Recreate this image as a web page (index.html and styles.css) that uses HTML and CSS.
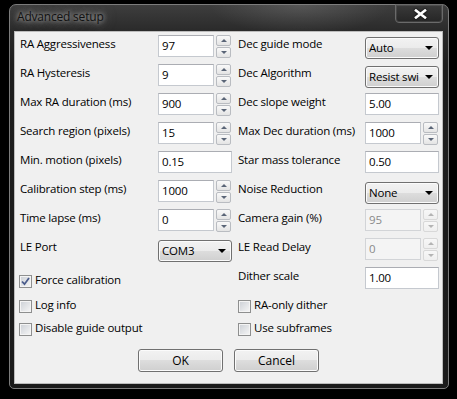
FILE: index.html
```html
<!DOCTYPE html>
<html lang="en">
<head>
    <meta charset="UTF-8">
    <title>Advanced setup</title>
    <link rel="stylesheet" href="styles.css">
</head>
<body>
    <div class="window">
        <div class="titlebar">
            <span class="title">Advanced setup</span>
            <span class="close">
                <svg width="13" height="10" viewBox="0 0 13 10"><path d="M2 1.5 L11 8.5 M11 1.5 L2 8.5" stroke="#fff" stroke-width="2.6" stroke-linecap="square"/></svg>
            </span>
        </div>

        <div class="client">
            <div class="form">
                <span class="lbl">RA Aggressiveness</span>
                <div class="spin"><span class="edit">97</span><span class="arrows"><i class="up"></i><i class="dn"></i></span></div>
                <span class="lbl">Dec guide mode</span>
                <div class="combo"><span class="val">Auto</span><i class="drop"></i></div>

                <span class="lbl">RA Hysteresis</span>
                <div class="spin"><span class="edit">9</span><span class="arrows"><i class="up"></i><i class="dn"></i></span></div>
                <span class="lbl">Dec Algorithm</span>
                <div class="combo"><span class="val">Resist swi</span><i class="drop"></i></div>

                <span class="lbl">Max RA duration (ms)</span>
                <div class="spin"><span class="edit">900</span><span class="arrows"><i class="up"></i><i class="dn"></i></span></div>
                <span class="lbl">Dec slope weight</span>
                <span class="edit wide">5.00</span>

                <span class="lbl">Search region (pixels)</span>
                <div class="spin"><span class="edit">15</span><span class="arrows"><i class="up"></i><i class="dn"></i></span></div>
                <span class="lbl">Max Dec duration (ms)</span>
                <div class="spin"><span class="edit">1000</span><span class="arrows"><i class="up"></i><i class="dn"></i></span></div>

                <span class="lbl">Min. motion (pixels)</span>
                <span class="edit wide">0.15</span>
                <span class="lbl">Star mass tolerance</span>
                <span class="edit wide">0.50</span>

                <span class="lbl">Calibration step (ms)</span>
                <div class="spin"><span class="edit">1000</span><span class="arrows"><i class="up"></i><i class="dn"></i></span></div>
                <span class="lbl">Noise Reduction</span>
                <div class="combo"><span class="val">None</span><i class="drop"></i></div>

                <span class="lbl">Time lapse (ms)</span>
                <div class="spin"><span class="edit">0</span><span class="arrows"><i class="up"></i><i class="dn"></i></span></div>
                <span class="lbl">Camera gain (%)</span>
                <div class="spin off"><span class="edit">95</span><span class="arrows"><i class="up"></i><i class="dn"></i></span></div>

                <span class="lbl">LE Port</span>
                <div class="combo"><span class="val">COM3</span><i class="drop"></i></div>
                <span class="lbl">LE Read Delay</span>
                <div class="spin off"><span class="edit">0</span><span class="arrows"><i class="up"></i><i class="dn"></i></span></div>

                <label class="check first span2"><span class="box checked"><svg width="9" height="9" viewBox="0 0 9 9"><path d="M1 4.5 L3.5 7.2 L8 1" fill="none" stroke="#4a5c8c" stroke-width="1.8"/></svg></span>Force calibration</label>
                <span class="lbl">Dither scale</span>
                <span class="edit wide">1.00</span>
            </div>

            <div class="checks">
                <label class="check"><span class="box"></span>Log info</label>
                <label class="check"><span class="box"></span>RA-only dither</label>
                <label class="check"><span class="box"></span>Disable guide output</label>
                <label class="check"><span class="box"></span>Use subframes</label>
            </div>

            <div class="buttons">
                <button class="btn">OK</button>
                <button class="btn">Cancel</button>
            </div>
        </div>
    </div>
</body>
</html>
```

FILE: styles.css
```css
* {
    margin: 0;
    padding: 0;
    box-sizing: border-box;
}

body {
    width: 457px;
    height: 399px;
    overflow: hidden;
    background: #000;
    font-family: "Open Sans", "Noto Sans", sans-serif;
    font-size: 11.5px;
    letter-spacing: -0.2px;
    color: #000;
}

.window {
    margin: 4px 0 0 9px;
    width: 440px;
    height: 385px;
    border: 1px solid #7c7c7c;
    border-radius: 7px 7px 5px 5px;
    padding: 0 5px 4px 4px;
    display: flex;
    flex-direction: column;
    background:
        radial-gradient(ellipse 90px 30px at 290px 0px, rgba(255, 255, 255, 0.13), transparent),
        linear-gradient(180deg, #3e3e3e 0px, #2a2a2a 26px, #1d1d1d 60px, #1b1b1b 100%);
}

.titlebar {
    height: 26px;
    display: flex;
    justify-content: space-between;
    align-items: flex-start;
}

.title {
    padding: 4px 0 0 3px;
    line-height: 16px;
    font-size: 12px;
    color: #111;
    text-shadow:
        0 0 4px rgba(190, 190, 190, 0.9),
        0 0 8px rgba(170, 170, 170, 0.8),
        0 0 14px rgba(150, 150, 150, 0.7);
}

.close {
    width: 48px;
    height: 19px;
    margin-top: -1px;
    border: 1px solid #6a6a6a;
    border-radius: 0 0 4px 4px;
    box-shadow: inset 0 0 0 1px rgba(255, 255, 255, 0.1);
    background: linear-gradient(180deg, #3a3a3a, #262626);
    display: flex;
    align-items: center;
    justify-content: center;
    padding-left: 3px;
}

.close svg {
    filter: drop-shadow(0 0 1px #000);
}

.client {
    flex: 1;
    background: #f0f0f0;
    border: 1px solid #bcbcbc;
}

.form {
    display: grid;
    grid-template-columns: 138px 80px 127px 74px;
    grid-auto-rows: 29px;
    padding: 3px 0 0 5px;
}

.lbl {
    padding-top: 1px;
    line-height: 16px;
    white-space: nowrap;
}

.edit {
    display: block;
    width: 56px;
    height: 22px;
    border: 1px solid #c5c9cf;
    border-top-color: #abadb3;
    background: #fff;
    padding: 0 3px;
    line-height: 20px;
}

.edit.wide {
    width: 74px;
}

.spin {
    display: flex;
    gap: 2px;
    align-items: flex-start;
}

.arrows {
    display: flex;
    flex-direction: column;
    gap: 1px;
    width: 15px;
}

.arrows i {
    height: 11px;
    border: 1px solid #b9bcc1;
    border-radius: 2px;
    background: linear-gradient(180deg, #f9f9f9, #e4e4e4);
    position: relative;
}

.arrows i::after {
    content: "";
    position: absolute;
    left: 4px;
    top: 3px;
    border-left: 3px solid transparent;
    border-right: 3px solid transparent;
}

.arrows .up::after {
    border-bottom: 3px solid #5a6577;
}

.arrows .dn::after {
    border-top: 3px solid #5a6577;
}

.spin.off .edit {
    background: #f4f4f4;
    border-color: #d2d4d7;
    color: #8a8a8a;
}

.spin.off .arrows i {
    border-color: #d8d8d8;
    background: linear-gradient(180deg, #f7f7f7, #efefef);
}

.spin.off .arrows .up::after {
    border-bottom-color: #b4b4b4;
}

.spin.off .arrows .dn::after {
    border-top-color: #b4b4b4;
}

.combo {
    width: 74px;
    height: 22px;
    margin-top: 2px;
    border: 1px solid #707070;
    border-radius: 3px;
    box-shadow: inset 0 0 0 1px #fbfbfb;
    background: linear-gradient(180deg, #f2f2f2 0%, #ebebeb 50%, #dddddd 50%, #cfcfcf 100%);
    display: flex;
    align-items: center;
    padding: 0 5px 0 3px;
}

.combo .val {
    flex: 1;
    overflow: hidden;
    white-space: nowrap;
    line-height: 20px;
}

.combo .drop {
    margin-left: 2px;
    border-left: 4px solid transparent;
    border-right: 4px solid transparent;
    border-top: 4px solid #000;
}

.check {
    display: flex;
    align-items: flex-start;
    gap: 3px;
    line-height: 16px;
    white-space: nowrap;
}

.check .box {
    width: 13px;
    height: 13px;
    margin-top: 3px;
    border: 1px solid #8e8f8f;
    box-shadow: inset 0 0 0 1px #f4f4f4;
    background: linear-gradient(135deg, #cbcfd5, #f7f7f7);
    display: flex;
    align-items: center;
    justify-content: center;
}

.check.first {
    margin: 5px 0 0 -1px;
}

.span2 {
    grid-column: span 2;
}

.checks {
    display: grid;
    grid-template-columns: 219px 200px;
    grid-auto-rows: 23px;
    padding: 1px 0 0 4px;
}

.buttons {
    display: flex;
    justify-content: center;
    gap: 11px;
    margin-top: 6px;
}

.btn {
    width: 85px;
    height: 23px;
    border: 1px solid #707070;
    border-radius: 3px;
    box-shadow: inset 0 0 0 1px #fbfbfb;
    background: linear-gradient(180deg, #f2f2f2 0%, #ebebeb 50%, #dddddd 50%, #cfcfcf 100%);
    font-family: inherit;
    font-size: 12px;
    color: #000;
}
```
